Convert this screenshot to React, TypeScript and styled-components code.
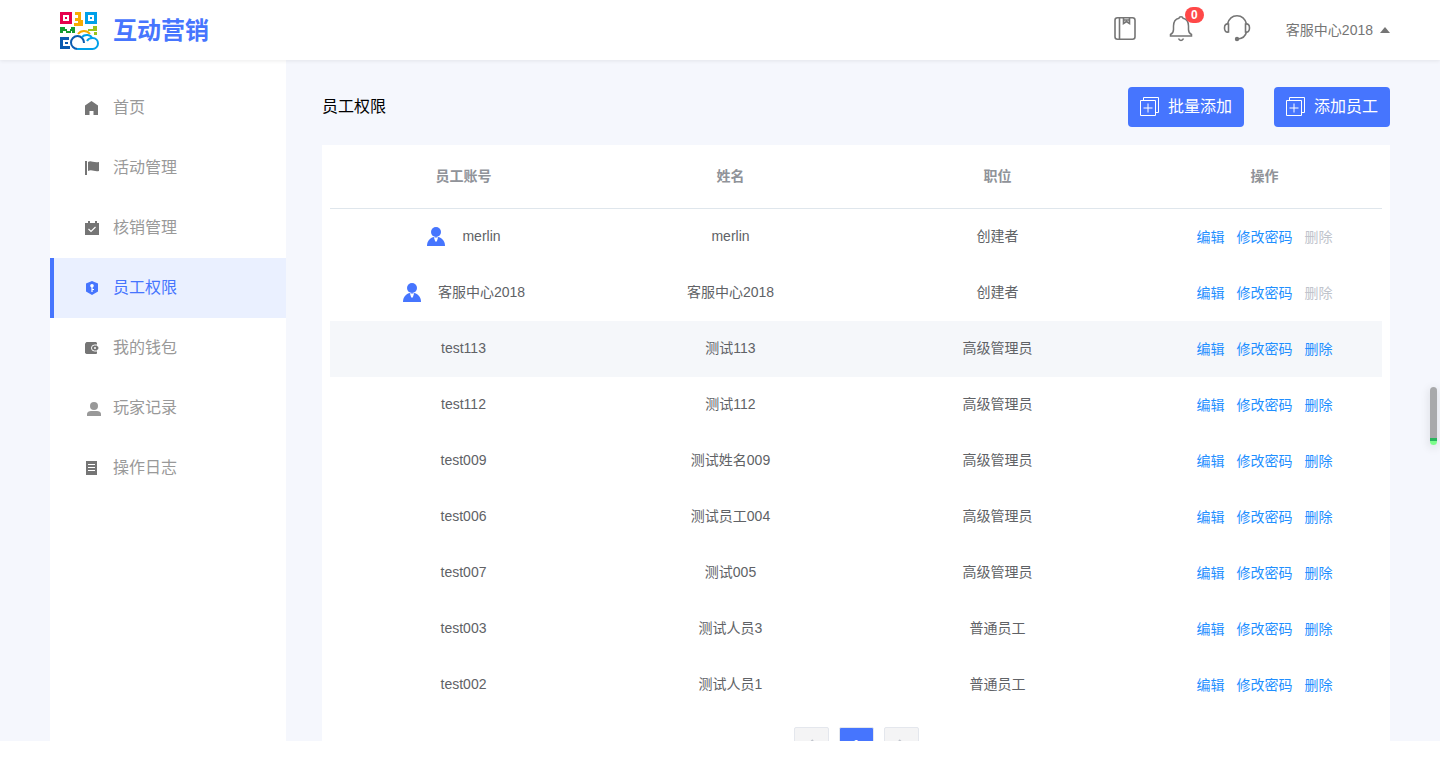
import React from "react";
import styled, { createGlobalStyle } from "styled-components";

const GlobalStyle = createGlobalStyle`
  * { box-sizing: border-box; }
  html, body { margin: 0; padding: 0; background: #fff; overflow: hidden; }
  body, button {
    font-family: "Liberation Sans", Arial, "Noto Sans CJK SC", sans-serif;
  }
  a { text-decoration: none; color: inherit; }
  button { border: 0; padding: 0; background: none; cursor: pointer; }
`;

const Page = styled.div`
  display: flex;
  flex-direction: column;
  height: calc(100vh - 16px);
  background: #f5f7fd;
  overflow: hidden;
`;

const Header = styled.header`
  flex: none;
  position: relative;
  z-index: 1;
  display: flex;
  align-items: center;
  justify-content: space-between;
  height: 60px;
  padding: 0 50px 0 60px;
  background: #fff;
  box-shadow: 0 1px 4px rgba(0, 0, 0, 0.08);
`;

const Brand = styled.a`
  display: flex;
  align-items: center;
  gap: 14px;
  padding-top: 2px;
  color: #4675fe;
  font-size: 24px;
  line-height: 32px;
  font-weight: 700;
`;

const Tools = styled.div`
  display: flex;
  align-items: center;
`;

const ToolButton = styled.button`
  position: relative;
  display: flex;
  width: 28px;
  height: 28px;
  margin: 0 28px 4px 0;
  color: #757575;
`;

const Badge = styled.span`
  position: absolute;
  top: -7px;
  right: -9px;
  width: 19px;
  height: 16px;
  border-radius: 8px;
  background: #ff4848;
  color: #fff;
  font-size: 12px;
  line-height: 17px;
  font-weight: 700;
  text-align: center;
`;

const Account = styled.button`
  display: flex;
  align-items: center;
  gap: 7px;
  margin-left: 7px;
  color: #757575;
  font-size: 14px;
  line-height: 20px;
`;

const Caret = styled.span`
  border: 5px solid transparent;
  border-top: 0;
  border-bottom: 6px solid #757575;
`;

const Body = styled.div`
  flex: 1;
  min-height: 0;
  display: flex;
  padding: 0 50px;
`;

const Sidebar = styled.nav`
  flex: none;
  width: 236px;
  padding-top: 18px;
  background: #fff;
`;

const NavItem = styled.a<{ $active?: boolean }>`
  display: flex;
  align-items: center;
  gap: 12px;
  height: 60px;
  padding-left: 31px;
  border-left: 4px solid ${(p) => (p.$active ? "#4675fe" : "transparent")};
  background: ${(p) => (p.$active ? "#eaf0ff" : "transparent")};
  color: ${(p) => (p.$active ? "#4675fe" : "#999")};
  font-size: 16px;
  line-height: 24px;

  svg { color: ${(p) => (p.$active ? "#4675fe" : "#757575")}; }
`;

const Main = styled.main`
  flex: 1;
  min-width: 0;
  padding: 27px 0 0 36px;
`;

const TitleBar = styled.div`
  display: flex;
  align-items: center;
  justify-content: space-between;
  height: 40px;
  margin-bottom: 18px;
`;

const Title = styled.h1`
  margin: 0;
  color: #000;
  font-size: 16px;
  font-weight: 400;
  line-height: 24px;
`;

const Actions = styled.div`
  display: flex;
  gap: 30px;
`;

const PrimaryButton = styled.button`
  display: flex;
  align-items: center;
  gap: 8px;
  height: 40px;
  padding: 0 12px;
  border-radius: 4px;
  background: #4675fe;
  color: #fff;
  font-size: 16px;
  line-height: 24px;
`;

const Card = styled.section`
  padding: 0 8px 20px;
  background: #fff;
`;

const TableClip = styled.div`
  overflow: hidden;
`;

const Table = styled.table`
  width: calc(100% + 16px);
  table-layout: fixed;
  border-collapse: separate;
  border-spacing: 0;
  color: #606266;
  font-size: 14px;
  line-height: 20px;
  text-align: center;
`;

const HeadCell = styled.th`
  height: 64px;
  padding: 0 0 2px;
  border-bottom: 1px solid #dfe6ec;
  color: #909399;
  font-weight: 700;
`;

const Row = styled.tr<{ $hover?: boolean }>`
  background: ${(p) => (p.$hover ? "#f5f7fa" : "#fff")};
`;

const Cell = styled.td`
  height: 56px;
  padding: 0 0 2px;
`;

const ActionCell = styled(Cell)`
  padding: 0;
`;

const AccountCell = styled.div`
  display: flex;
  align-items: center;
  justify-content: center;
  gap: 16px;
`;

const RowActions = styled.div`
  display: flex;
  justify-content: center;
  gap: 12px;
`;

const RowLink = styled.button`
  color: #1f8fff;
  font-size: 14px;
  line-height: 20px;

  &:disabled { color: #c0c4cc; cursor: default; }
`;

const Pagination = styled.div`
  display: flex;
  justify-content: center;
  gap: 10px;
  padding-top: 14px;
`;

const PageButton = styled.button<{ $active?: boolean }>`
  display: flex;
  align-items: center;
  justify-content: center;
  width: 35px;
  height: 35px;
  border: 1px solid #e4e7ed;
  border-radius: 2px;
  background: ${(p) => (p.$active ? "#4675fe" : "#f4f4f5")};
  color: ${(p) => (p.$active ? "#fff" : "#c0c4cc")};
  font-size: 13px;
  font-weight: 700;
`;

const ScrollThumb = styled.div`
  position: fixed;
  right: 3px;
  top: 387px;
  width: 7px;
  height: 58px;
  border-radius: 4px;
  background: linear-gradient(#a8a9ab 51px, #27b45c 51px, #27b45c 54px, #7dfc8c 54px);
  box-shadow: 0 2px 8px 2px rgba(0, 0, 0, 0.08);
`;

const Logo = () => (
  <svg width="39" height="38" viewBox="0 0 39 38" fill="none">
    <path fill="#e6004c" fillRule="evenodd" d="M0 0h12v12H0zM3 3v6h6V3zM5 5h2v2H5z" />
    <path fill="#00a0e9" fillRule="evenodd" d="M25 0h12v12H25zM28 3v6h6V3zM30 5h2v2h-2z" />
    <path fill="#f8ab00" d="M15 0h6v8h2v6h-9v-3h4V9h-3V6h3V3h-3z" />
    <path fill="#149b32" d="M0 15h5v2h2v2h3v-2h1v-2h4v6h-3v-2h-1v2H6v-2H3v2H0z" />
    <path fill="#9bc31c" d="M33 14h4v5h-9v-2h5zM34 20h3v3h-3z" />
    <path fill="#0b5bb0" d="M0 25h9v3H3v6h7v3H0zM5 30h3v2H5z" />
    <path stroke="#f8ab00" strokeWidth="2" d="M18 22c3-4 9-4 12 0" />
    <path
      stroke="#0b5bb0"
      strokeWidth="2"
      d="M24 31c0-4-3-7-6.500-7S11 27 11 30.500 14 37 17.500 37"
    />
    <path
      stroke="#00a0e9"
      strokeWidth="2"
      d="M17 37h15.500c3 0 5.500-2.500 5.500-5.500S36 26 32.500 26c-2.500 0-4.500 1-5.500 3M22 25c2.500-3 9-3 10 1.500"
    />
  </svg>
);

const BookIcon = () => (
  <svg width="28" height="28" viewBox="0 0 28 28" fill="none" stroke="currentColor" strokeWidth="1.600">
    <rect x="4" y="3.800" width="20" height="21.500" rx="2.500" />
    <path d="M8.500 4v21M12.500 4v5.500l3-2 3 2V4M13 6h5" />
  </svg>
);

const BellIcon = () => (
  <svg width="28" height="28" viewBox="0 0 28 28" fill="none" stroke="currentColor" strokeWidth="1.500">
    <path d="M3.500 22h21v-1.500c-2-1-3-2.500-3-5V12c0-4-2-7-5.500-7.800C15.700 2.300 12.300 2.300 12 4.200 8.500 5 6.500 8 6.500 12v3.500c0 2.500-1 4-3 5z" />
    <path d="M11.500 24.500c1 2.500 4 2.500 5 0" />
  </svg>
);

const HeadsetIcon = () => (
  <svg width="28" height="28" viewBox="0 0 28 28" fill="none" stroke="currentColor" strokeWidth="1.600">
    <path d="M4.500 10C6 4.500 9.500 1.800 14 1.800s8 2.700 9.500 8.200M23.500 18c-1 4-4 6.500-8.500 7" />
    <path d="M5.500 10C3 9.500 1.500 11 1.500 14s1.500 4.500 4 4zM22.500 10c2.500-.5 4 1 4 4s-1.500 4.500-4 4z" />
    <circle cx="14" cy="25" r="2.200" fill="currentColor" stroke="none" />
  </svg>
);

const AddIcon = () => (
  <svg width="20" height="20" viewBox="0 0 20 20" fill="none" stroke="currentColor">
    <path d="M.5 3.500h15v15H.5zM3.500 3V.5h15v15H16M8 6.500v9M3.500 11h9" />
  </svg>
);

const UserIcon = () => (
  <svg width="20" height="20" viewBox="0 0 20 20" fill="#4675fe">
    <circle cx="10" cy="6" r="5" />
    <path d="M1 20c0-4.500 2.500-7.800 6.500-9h5c4 1.200 6.500 4.500 6.500 9z" />
    <path d="M7.800 11l1.400 4.500h1.600l1.400-4.500-1.200.5H9z" fill="#fff" />
  </svg>
);

const navIcons: Record<string, React.ReactNode> = {
  home: <path d="M6.500 1L13 5.500V15H8.500v-4h-4v4H0V5.500z" />,
  flag: <path d="M0 1h2v14H0zM3 2c3-2 5 1 11 0v9c-5 1-7-2-11 0z" />,
  check: (
    <>
      <path d="M0 3h3V1h2v2h5V1h2v2h2v12H0z" />
      <path d="M3.500 9l2.500 2.500L10.500 7" fill="none" stroke="#fff" strokeWidth="1.200" />
    </>
  ),
  shield: (
    <>
      <path d="M7 1l6 2.500v8L7 15l-6-3.500v-8z" />
      <path d="M7 5v7M7 9.500h2" stroke="#fff" strokeWidth="1.200" />
      <circle cx="7" cy="5.800" r="1.800" fill="#fff" />
    </>
  ),
  wallet: (
    <>
      <path d="M1.500 2H11l1 1v10.500l-1 .5H1.500L0 13V3.500z" />
      <path d="M14 5H9.500a3 3 0 000 6H14" fill="none" stroke="#fff" />
      <rect x="7.500" y="6" width="6" height="4" rx="2" />
      <circle cx="10" cy="8" r="1" fill="#fff" />
    </>
  ),
  player: (
    <>
      <circle cx="9" cy="6" r="4" fill="#999" />
      <path d="M2 16v-2c0-2 2-3 4-3h6c2 0 4 1 4 3v2z" fill="#999" />
    </>
  ),
  log: (
    <>
      <path d="M1 1h11v14H1z" />
      <path d="M3 4.500h7M3 7.500h7M3 10.500h7" stroke="#fff" />
    </>
  ),
};

const NavIcon = ({ name }: { name: string }) => (
  <svg width="16" height="16" viewBox="0 0 16 16" fill="currentColor">
    {navIcons[name]}
  </svg>
);

const nav = [
  ["home", "首页"],
  ["flag", "活动管理"],
  ["check", "核销管理"],
  ["shield", "员工权限"],
  ["wallet", "我的钱包"],
  ["player", "玩家记录"],
  ["log", "操作日志"],
];

const staff = [
  { account: "merlin", name: "merlin", role: "创建者", owner: true },
  { account: "客服中心2018", name: "客服中心2018", role: "创建者", owner: true },
  { account: "test113", name: "测试113", role: "高级管理员" },
  { account: "test112", name: "测试112", role: "高级管理员" },
  { account: "test009", name: "测试姓名009", role: "高级管理员" },
  { account: "test006", name: "测试员工004", role: "高级管理员" },
  { account: "test007", name: "测试005", role: "高级管理员" },
  { account: "test003", name: "测试人员3", role: "普通员工" },
  { account: "test002", name: "测试人员1", role: "普通员工" },
];

export default function App() {
  return (
    <Page lang="zh-CN">
      <GlobalStyle />
      <Header>
        <Brand href="#">
          <Logo />
          互动营销
        </Brand>
        <Tools>
          <ToolButton aria-label="帮助手册">
            <BookIcon />
          </ToolButton>
          <ToolButton aria-label="消息">
            <BellIcon />
            <Badge>0</Badge>
          </ToolButton>
          <ToolButton aria-label="客服">
            <HeadsetIcon />
          </ToolButton>
          <Account>
            客服中心2018
            <Caret />
          </Account>
        </Tools>
      </Header>
      <Body>
        <Sidebar>
          {nav.map(([icon, label]) => (
            <NavItem key={icon} href="#" $active={icon === "shield"}>
              <NavIcon name={icon} />
              {label}
            </NavItem>
          ))}
        </Sidebar>
        <Main>
          <TitleBar>
            <Title>员工权限</Title>
            <Actions>
              <PrimaryButton>
                <AddIcon />
                批量添加
              </PrimaryButton>
              <PrimaryButton>
                <AddIcon />
                添加员工
              </PrimaryButton>
            </Actions>
          </TitleBar>
          <Card>
            <TableClip>
              <Table>
                <thead>
                  <tr>
                    <HeadCell>员工账号</HeadCell>
                    <HeadCell>姓名</HeadCell>
                    <HeadCell>职位</HeadCell>
                    <HeadCell>操作</HeadCell>
                  </tr>
                </thead>
                <tbody>
                  {staff.map((s) => (
                    <Row key={s.account} $hover={s.account === "test113"}>
                      <Cell>
                        <AccountCell>
                          {s.owner && <UserIcon />}
                          {s.account}
                        </AccountCell>
                      </Cell>
                      <Cell>{s.name}</Cell>
                      <Cell>{s.role}</Cell>
                      <ActionCell>
                        <RowActions>
                          <RowLink>编辑</RowLink>
                          <RowLink>修改密码</RowLink>
                          <RowLink disabled={s.owner}>删除</RowLink>
                        </RowActions>
                      </ActionCell>
                    </Row>
                  ))}
                </tbody>
              </Table>
            </TableClip>
            <Pagination>
              <PageButton aria-label="上一页">
                <svg width="12" height="12" viewBox="0 0 12 12" fill="none" stroke="currentColor" strokeWidth="2">
                  <path d="M8 1L3 6l5 5" />
                </svg>
              </PageButton>
              <PageButton $active>1</PageButton>
              <PageButton aria-label="下一页">
                <svg width="12" height="12" viewBox="0 0 12 12" fill="none" stroke="currentColor" strokeWidth="2">
                  <path d="M4 1l5 5-5 5" />
                </svg>
              </PageButton>
            </Pagination>
          </Card>
        </Main>
      </Body>
      <ScrollThumb />
    </Page>
  );
}
